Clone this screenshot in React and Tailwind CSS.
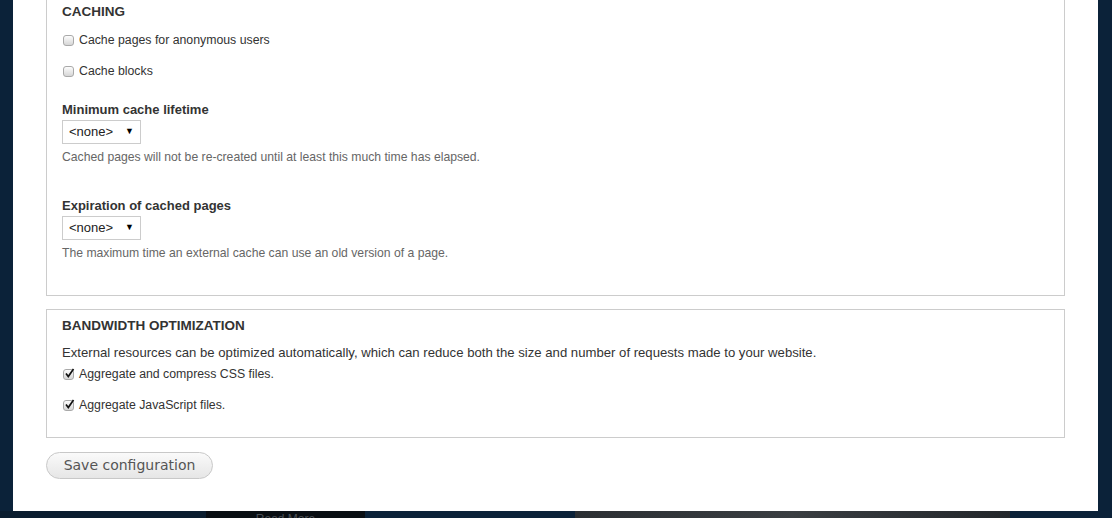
import { useState } from 'react'

const Checkbox = ({ checked, label }) => (
  <label className="flex items-center h-[16px] text-[12.3px] leading-[16px] text-[#333]">
    <span className="relative ml-[1px] mr-[5px] w-[11px] h-[11px] rounded-[3px] border border-[#a9a9a9] bg-gradient-to-b from-[#fdfdfd] to-[#d6d6d6]">
      {checked && (
        <svg className="absolute left-[0px] top-[-2px]" width="11" height="11" viewBox="0 0 11 11">
          <path d="M2 5.5 L4.3 8.5 L9.5 1" fill="none" stroke="#111" strokeWidth="1.7" />
        </svg>
      )}
    </span>
    {label}
  </label>
)

const Select = () => (
  <div className="mt-[2px] w-[79px] h-[24px] border border-[#ccc] bg-white flex items-center justify-between pl-[6px] pr-[6px] text-[13px] text-[#222]">
    <span>&lt;none&gt;</span>
    <span className="text-[9px] text-black">▼</span>
  </div>
)

export default function App() {
  const [state] = useState({ anon: false, blocks: false, css: true, js: true })

  return (
    <div className="min-h-[518px] bg-[#0b2239] font-['Liberation_Sans',Arial,sans-serif] overflow-hidden">
      <div className="ml-[13px] w-[1085px] bg-white pl-[33px] pr-[33px] pb-[32px]">
        <fieldset className="border-x border-b border-[#ccc] px-[15px] pb-[35px]">
          <h2 className="mt-[4px] text-[13.5px] leading-[16px] font-bold text-[#333]">CACHING</h2>
          <div className="mt-[12px]">
            <Checkbox checked={state.anon} label="Cache pages for anonymous users" />
          </div>
          <div className="mt-[15px]">
            <Checkbox checked={state.blocks} label="Cache blocks" />
          </div>
          <div className="mt-[23px] text-[13px] leading-[16px] font-bold text-[#333]">Minimum cache lifetime</div>
          <Select />
          <p className="mt-[6px] text-[12.2px] leading-[14px] text-[#666]">
            Cached pages will not be re-created until at least this much time has elapsed.
          </p>
          <div className="mt-[34px] text-[13px] leading-[16px] font-bold text-[#333]">Expiration of cached pages</div>
          <Select />
          <p className="mt-[6px] text-[12.2px] leading-[14px] text-[#666]">
            The maximum time an external cache can use an old version of a page.
          </p>
        </fieldset>

        <fieldset className="mt-[13px] border border-[#ccc] px-[15px] pt-[8px] pb-[24px]">
          <h2 className="text-[13.5px] leading-[16px] font-bold text-[#333]">BANDWIDTH OPTIMIZATION</h2>
          <p className="mt-[11px] text-[13.15px] leading-[16px] text-[#333]">
            External resources can be optimized automatically, which can reduce both the size and number of requests made to your website.
          </p>
          <div className="mt-[5px]">
            <Checkbox checked={state.css} label="Aggregate and compress CSS files." />
          </div>
          <div className="mt-[15px]">
            <Checkbox checked={state.js} label="Aggregate JavaScript files." />
          </div>
        </fieldset>

        <button className="mt-[14px] w-[167px] h-[27px] rounded-full border border-[#c8c8c8] bg-gradient-to-b from-[#fafafa] to-[#e6e6e6] font-['DejaVu_Sans',sans-serif] text-[14px] text-[#555]">
          Save configuration
        </button>
      </div>

      <div className="flex h-[7px] overflow-hidden">
        <div className="w-[206px] bg-[#0a1d2f]" />
        <div className="w-[159px] bg-[#090e13] flex justify-center">
          <span className="text-[12px] leading-[14px] text-[#4a4f55] pt-[1px]">Read More</span>
        </div>
        <div className="w-[210px]" />
        <div className="w-[435px] bg-gradient-to-r from-[#2b2f33] via-[#3a3e42] to-[#23272b]" />
      </div>
    </div>
  )
}
